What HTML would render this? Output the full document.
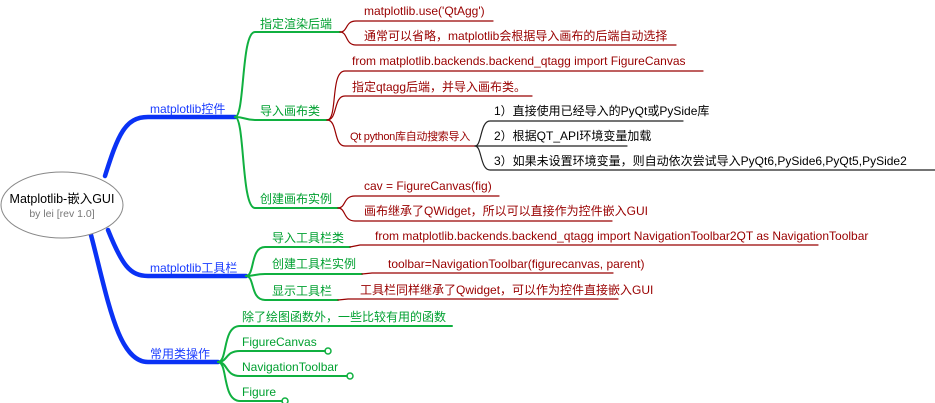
<!DOCTYPE html>
<html><head><meta charset="utf-8"><style>
html,body{margin:0;padding:0;background:#fff;width:935px;height:403px;overflow:hidden}
svg text{font-family:"Liberation Sans","Noto Sans CJK SC",sans-serif;font-size:12px}
.g{fill:#00a030}.r{fill:#990000}.k{fill:#000}.b{fill:#1a3cff}
</style></head><body>
<svg width="935" height="403" viewBox="0 0 935 403" xmlns="http://www.w3.org/2000/svg">
<g fill="none" stroke-linecap="round">
<g stroke="#0a32f5" stroke-width="4.5">
<path d="M105,176 C118,135 125,117 148,117 L235,117"/>
<path d="M108,230 C122,265 130,276 148,276 L246,276"/>
<path d="M91,235 C108,300 118,362 148,362 L218,362"/>
</g>
<g stroke="#10b040" stroke-width="2">
<path d="M235,117 C245,117 241,32 255,32 L340,32"/>
<path d="M235,117 C245,117 245,120 255,120 L327,120"/>
<path d="M235,117 C245,117 241,208 255,208 L338,208"/>
<path d="M246,276 C255,276 250,247 265,247 L350,247"/>
<path d="M246,276 C255,276 255,274 265,274 L362,274"/>
<path d="M246,276 C255,276 250,300 265,300 L338,300"/>
<path d="M218,362 C228,362 222,326 240,326 L452,326"/>
<path d="M218,362 C228,362 225,351 240,351 L325,351"/>
<path d="M218,362 C228,362 225,376 240,376 L347,376"/>
<path d="M218,362 C228,362 222,401 240,401 L282,401"/>
<circle cx="328" cy="351" r="3" stroke-width="1.5"/>
<circle cx="350" cy="376" r="3" stroke-width="1.5"/>
<circle cx="285" cy="401" r="3" stroke-width="1.5"/>
</g>
<g stroke="#990000" stroke-width="1.2">
<path d="M340,32 C348,32 345,21 356,21 L493,21"/>
<path d="M340,32 C348,32 345,45 356,45 L676,45"/>
<path d="M327,120 C338,120 330,71 345,71 L703,71"/>
<path d="M327,120 C338,120 333,96 345,96 L532,96"/>
<path d="M327,120 C338,120 333,146 345,146 L475,146"/>
<path d="M338,208 C346,208 343,196 355,196 L499,196"/>
<path d="M338,208 C346,208 343,221 355,221 L612,221"/>
<path d="M350,247 L360,245 L818,245"/>
<path d="M362,274 L372,273 L613,273"/>
<path d="M338,300 L348,299 L618,299"/>
</g>
<g stroke="#222" stroke-width="1.2">
<path d="M475,146 C482,146 480,121 490,121 L683,121"/>
<path d="M475,146 L627,146"/>
<path d="M475,146 C482,146 480,170 490,170 L935,170"/>
</g>
<ellipse cx="62" cy="205" rx="61" ry="33" fill="#fff" stroke="#888" stroke-width="1"/>
</g>
<text x="62" y="203" text-anchor="middle" class="k" style="font-size:12.5px">Matplotlib-嵌入GUI</text>
<text x="62" y="217" text-anchor="middle" fill="#777" style="font-size:10.5px">by lei [rev 1.0]</text>
<text x="150" y="113" class="b">matplotlib控件</text>
<text x="150" y="272" class="b">matplotlib工具栏</text>
<text x="150" y="358" class="b">常用类操作</text>
<text x="260" y="28" class="g">指定渲染后端</text>
<text x="260" y="115" class="g">导入画布类</text>
<text x="260" y="203" class="g">创建画布实例</text>
<text x="272" y="242" class="g">导入工具栏类</text>
<text x="272" y="268" class="g">创建工具栏实例</text>
<text x="272" y="295" class="g">显示工具栏</text>
<text x="242" y="321" class="g">除了绘图函数外，一些比较有用的函数</text>
<text x="242" y="346" class="g">FigureCanvas</text>
<text x="242" y="371" class="g">NavigationToolbar</text>
<text x="242" y="396" class="g">Figure</text>
<text x="364" y="15" class="r">matplotlib.use('QtAgg')</text>
<text x="364" y="40" class="r">通常可以省略，matplotlib会根据导入画布的后端自动选择</text>
<text x="352" y="65" class="r">from matplotlib.backends.backend_qtagg import FigureCanvas</text>
<text x="352" y="91" class="r">指定qtagg后端，并导入画布类。</text>
<text x="350" y="140" class="r" style="font-size:11px;letter-spacing:-0.3px">Qt python库自动搜索导入</text>
<text x="364" y="190" class="r">cav = FigureCanvas(fig)</text>
<text x="364" y="215" class="r">画布继承了QWidget，所以可以直接作为控件嵌入GUI</text>
<text x="375" y="240" class="r">from matplotlib.backends.backend_qtagg import NavigationToolbar2QT as NavigationToolbar</text>
<text x="388" y="268" class="r">toolbar=NavigationToolbar(figurecanvas, parent)</text>
<text x="360" y="294" class="r">工具栏同样继承了Qwidget，可以作为控件直接嵌入GUI</text>
<text x="494" y="115" class="k">1）直接使用已经导入的PyQt或PySide库</text>
<text x="494" y="140" class="k">2）根据QT_API环境变量加载</text>
<text x="494" y="165" class="k">3）如果未设置环境变量，则自动依次尝试导入PyQt6,PySide6,PyQt5,PySide2</text>
</svg>
</body></html>
